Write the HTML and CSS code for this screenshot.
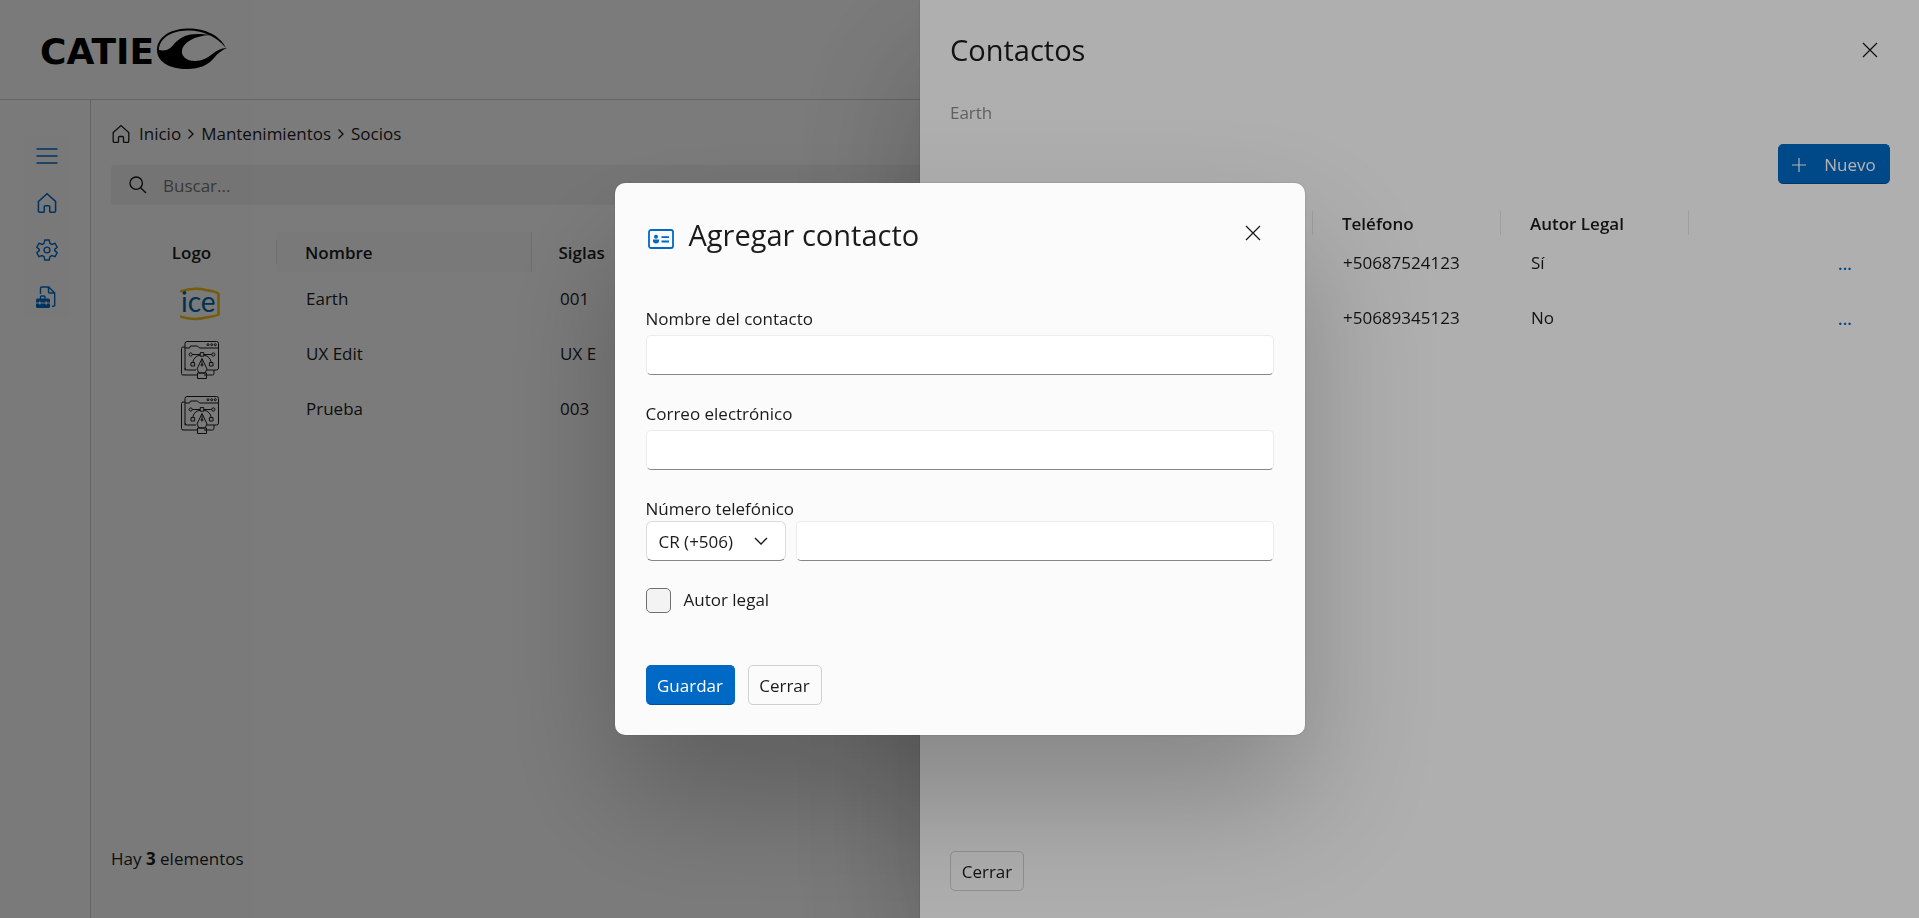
FILE: index.html
```html
<!DOCTYPE html>
<html lang="es">
<head>
<meta charset="utf-8">
<title>CATIE - Socios</title>
<meta name="viewport" content="width=device-width, initial-scale=1">
<link rel="stylesheet" href="styles.css">
</head>
<body>
<svg class="defs" aria-hidden="true">
  <symbol id="i-home" viewBox="0 0 20 20"><path d="M2.2 8.6 10 1.6l7.800 7v8.600a1.200 1.200 0 0 1-1.200 1.200h-3.100a1 1 0 0 1-1-1v-3.900a1 1 0 0 0-1-1H8.500a1 1 0 0 0-1 1v3.900a1 1 0 0 1-1 1H3.400a1.200 1.200 0 0 1-1.200-1.200z"/></symbol>
  <symbol id="i-close" viewBox="0 0 16 16"><path d="M1 1l14 14M15 1 1 15"/></symbol>
  <symbol id="i-next" viewBox="0 0 8 12"><path d="M1.500 1.500 6 6l-4.500 4.500"/></symbol>
  <symbol id="i-design" viewBox="0 0 40 40">
    <path d="M5 30.500V3.500a2 2 0 0 1 2-2h29.500a2 2 0 0 1 2 2V28a2 2 0 0 1-2 2H27M16 30H7a2 2 0 0 1-2-2M5 7H3a1.500 1.500 0 0 0-1.500 1.500v25A1.500 1.500 0 0 0 3 35h14M24 35h8.500a1.500 1.500 0 0 0 1.500-1.500V30M5 8h4.500l1-2h7l2 2h19"/>
    <circle cx="28" cy="4.700" r="1"/><circle cx="31.700" cy="4.700" r="1"/><circle cx="35.300" cy="4.700" r="1"/>
    <path d="M12.500 14.500h7.500M24 14.500h7.500M20.200 12.600h3.600v3.600h-3.600zM20.200 15.200q-6.500 1-7.400 7.300M23.800 15.200q6.500 1 7.400 7.300M11 22.600h3.600v3.400H11zM29.400 22.600H33v3.400h-3.600z"/>
    <circle cx="10.700" cy="14.500" r="1.600"/><circle cx="33.300" cy="14.500" r="1.600"/>
    <path d="M22 18.500 17 29l2 4h6l2-4zM22 19v6M17.500 33h9v5.500h-9z"/><circle cx="22" cy="25" r="1"/>
  </symbol>
</svg>

<div class="app">
  <header class="topbar">
    <svg class="brand" viewBox="0 0 190 44" role="img" aria-label="CATIE">
      <text x="0" y="37" class="brand-text">CATIE</text>
      <path d="M186 21C180 8 164 1 147 1.500C129 2 117 11 117 23C117 35 130 42 147 42C160 42 168 38 174 31C178 26 182 23 187 21C174 21 170 34 155 34C146 34 141 29 142 23C144 15 154 9 170 8C150 5 143 9 137 14C131 20 129 25 119 23C119 12 130 4 147 3.500C163 3 177 10 186 21Z"/>
    </svg>
  </header>
  <div class="body">
    <nav class="side" aria-label="Principal">
      <div class="side-menu">
        <button class="side-btn" type="button" aria-label="Menú"><svg class="ico-side" viewBox="0 0 22 22"><path d="M.5 4h21M.5 11h21M.5 18h21"/></svg></button>
        <a class="side-btn" href="#" aria-label="Inicio"><svg class="ico-side"><use href="#i-home"/></svg></a>
        <a class="side-btn" href="#" aria-label="Configuración"><svg class="ico-side" viewBox="0 0 22 22"><path d="M8.800 1h4.400l.7 3.300 1.900 1.100 3.200-1 2.200 3.800-2.500 2.200v1.200l2.500 2.200-2.200 3.800-3.200-1-1.900 1.100-.7 3.300H8.800l-.7-3.300-1.900-1.100-3.200 1L.8 13.800l2.500-2.200v-1.200L.8 8.200 3 4.400l3.200 1 1.900-1.100z"/><circle cx="11" cy="11" r="2.900"/></svg></a>
        <a class="side-btn" href="#" aria-label="Mantenimientos"><svg class="ico-side" viewBox="0 0 22 22"><path d="M4.500 8V2.200A1.200 1.200 0 0 1 5.700 1h7l6 6v12a1.200 1.200 0 0 1-1.200 1.200H16M12.500 1v5a1 1 0 0 0 1 1h5M4.500 13v-2a1 1 0 0 1 1-1H8a1 1 0 0 1 1 1v2"/><path class="solid" d="M1.500 12.500h11a1.500 1.500 0 0 1 1.500 1.500v2.500h-3v-1h-1.500v1h-5v-1H3v1H0V14a1.500 1.500 0 0 1 1.500-1.500zM0 17.500h3v1h1.500v-1h5v1H11v-1h3v3a1.500 1.500 0 0 1-1.500 1.500h-11A1.500 1.500 0 0 1 0 20.500z"/></svg></a>
      </div>
    </nav>
    <main class="main">
      <nav class="crumbs" aria-label="Ruta">
        <a class="crumb crumb-home" href="#"><svg class="ico-crumb"><use href="#i-home"/></svg>Inicio</a>
        <svg class="ico-next"><use href="#i-next"/></svg>
        <a class="crumb" href="#">Mantenimientos</a>
        <svg class="ico-next"><use href="#i-next"/></svg>
        <a class="crumb" href="#">Socios</a>
      </nav>
      <label class="search">
        <svg class="ico-search" viewBox="0 0 18 18"><circle cx="7.200" cy="7.200" r="6.200"/><path d="M11.700 11.700 17 17"/></svg>
        <input class="search-input" type="search" placeholder="Buscar..." aria-label="Buscar">
      </label>
      <table class="grid">
        <colgroup><col class="c-logo"><col class="c-name"><col class="c-code"><col></colgroup>
        <thead><tr><th class="th-logo">Logo</th><th class="th-name">Nombre</th><th>Siglas</th><th></th></tr></thead>
        <tbody>
          <tr><td class="td-logo"><svg class="logo-img" viewBox="0 0 40 40" role="img" aria-label="ice"><path class="ice-frame" d="M0 6.500Q13 2 26 5Q38 7 38.500 9V29.500Q36 31 26 32.500Q13 36 0 31.500"/><text x="1" y="27" class="ice-text">ice</text></svg></td><td>Earth</td><td>001</td><td></td></tr>
          <tr><td class="td-logo"><svg class="logo-img design"><use href="#i-design"/></svg></td><td>UX Edit</td><td>UX E</td><td></td></tr>
          <tr><td class="td-logo"><svg class="logo-img design"><use href="#i-design"/></svg></td><td>Prueba</td><td>003</td><td></td></tr>
        </tbody>
      </table>
      <p class="count">Hay <b>3</b> elementos</p>
    </main>
  </div>
</div>

<div class="scrim">
  <aside class="drawer" role="dialog" aria-labelledby="drawer-title">
    <div class="drawer-head">
      <h2 class="title" id="drawer-title">Contactos</h2>
      <button class="close" type="button" aria-label="Cerrar panel"><svg class="ico-close"><use href="#i-close"/></svg></button>
    </div>
    <p class="partner">Earth</p>
    <div class="drawer-tools">
      <button class="btn btn-primary btn-new" type="button"><svg class="ico-plus" viewBox="0 0 14 14"><path d="M7 0v14M0 7h14"/></svg>Nuevo</button>
    </div>
    <table class="contacts">
      <thead><tr><th></th><th></th><th>Teléfono</th><th>Autor Legal</th><th class="last"></th></tr></thead>
      <tbody>
        <tr><td></td><td></td><td>+50687524123</td><td>Sí</td><td class="more"><a class="more-link" href="#" aria-label="Opciones">...</a></td></tr>
        <tr><td></td><td></td><td>+50689345123</td><td>No</td><td class="more"><a class="more-link" href="#" aria-label="Opciones">...</a></td></tr>
      </tbody>
    </table>
    <div class="drawer-foot"><button class="btn" type="button">Cerrar</button></div>
  </aside>
</div>

<div class="scrim scrim-center">
  <form class="modal" role="dialog" aria-labelledby="modal-title">
    <div class="modal-head">
      <svg class="ico-card" viewBox="0 0 26 22"><rect x="1" y="2" width="24" height="18" rx="2"/><circle class="solid" cx="8" cy="8.700" r="2"/><path class="solid" d="M5 11.500h6v1.300a3 2.700 0 0 1-6 0z"/><path d="M13.500 9.200H21M13.500 13.500H21"/></svg>
      <h2 class="title" id="modal-title">Agregar contacto</h2>
      <button class="close" type="button" aria-label="Cerrar diálogo"><svg class="ico-close"><use href="#i-close"/></svg></button>
    </div>
    <div class="field">
      <label for="nombre">Nombre del contacto</label>
      <input class="input" id="nombre" type="text">
    </div>
    <div class="field">
      <label for="correo">Correo electrónico</label>
      <input class="input" id="correo" type="email">
    </div>
    <div class="field field-phone">
      <label for="telefono">Número telefónico</label>
      <div class="phone">
        <div class="select-wrap">
          <select class="input select" aria-label="Código de país"><option>CR (+506)</option></select>
          <svg class="ico-down" viewBox="0 0 14 8"><path d="M1 1l6 6 6-6"/></svg>
        </div>
        <input class="input" id="telefono" type="tel">
      </div>
    </div>
    <label class="check"><input class="check-box" type="checkbox">Autor legal</label>
    <div class="actions">
      <button class="btn btn-primary" type="submit">Guardar</button>
      <button class="btn" type="button">Cerrar</button>
    </div>
  </form>
</div>
</body>
</html>
```
FILE: styles.css
```css
* { box-sizing: border-box; }

:root {
  --ink: #1b1b1b;
  --accent: #0069c5;
  --surface: #fbfbfb;
  --shadow: 0 0 2px rgba(0, 0, 0, .2), 0 64px 128px rgba(0, 0, 0, .24);
}

body {
  margin: 0;
  color: var(--ink);
  background: var(--surface);
  font: 17px/26px "Segoe UI", "Open Sans", "Noto Sans", sans-serif;
  overflow: hidden;
}

svg { fill: none; stroke: currentColor; flex: none; }
.defs { position: absolute; width: 0; height: 0; }
.solid { fill: currentColor; stroke: none; }
button, input, select { font: inherit; color: inherit; }
a { color: inherit; text-decoration: none; }
p, h2 { margin: 0; }
table { border-collapse: collapse; table-layout: fixed; width: 100%; text-align: left; }
th { font-weight: 600; }

.app { display: flex; flex-direction: column; height: 100vh; }
.topbar { height: 100px; padding: 27px 40px 0; border-bottom: 1px solid #cfcfcf; flex: none; }
.brand { width: 190px; height: 44px; fill: #000; stroke: none; display: block; overflow: visible; }
.brand-text { font: bold 36px "DejaVu Sans", sans-serif; }
.body { display: flex; flex: 1; min-height: 0; }

.side { width: 91px; padding: 36px 0 0 24px; border-right: 1px solid #cfcfcf; flex: none; }
.side-menu { display: flex; flex-direction: column; gap: 7px; width: 45px; background: #f8f8f8; }
.side-btn {
  display: flex; align-items: center; justify-content: center;
  width: 45px; height: 40px; padding: 0; border: 0;
  background: none; color: var(--accent);
}
.ico-side { width: 22px; height: 22px; stroke-width: 1.400; }

.main { display: flex; flex-direction: column; flex: 1; min-width: 0; padding: 20px 20px 46px; }
.crumbs { display: flex; align-items: center; gap: 6px; height: 28px; }
.crumb-home { display: flex; align-items: center; gap: 8px; }
.ico-crumb { width: 20px; height: 20px; stroke-width: 1.300; }
.ico-next { width: 8px; height: 12px; stroke-width: 1.300; }

.search {
  display: flex; align-items: center; gap: 16px;
  height: 40px; margin-top: 17px; padding: 0 18px;
  background: #efefef; border-radius: 4px; flex: none;
}
.ico-search { width: 18px; height: 18px; stroke-width: 1.400; }
.search-input { flex: 1; padding: 2px 0 0; border: 0; background: none; outline: 0; }
.search-input::placeholder { color: #767676; opacity: 1; }

.grid { margin-top: 27px; }
.c-logo { width: 166px; }
.c-name { width: 254px; }
.c-code { width: 254px; }
.grid th { height: 40px; padding: 2px 27px 0; border-right: 1px solid #e2e2e2; }
.grid .th-logo {
  padding: 2px 5px 0 0; text-align: center; border: 0;
  background: linear-gradient(#e2e2e2, #e2e2e2) right center / 1px 24px no-repeat;
}
.grid .th-name { padding-left: 28px; background: #f6f6f6; }
.grid td { height: 55px; padding: 14px 29px 0; vertical-align: top; }
.grid .td-logo { padding: 13px 0 0 69px; }
.logo-img { display: block; width: 40px; height: 40px; }
.design { stroke-width: 1; }
.ice-frame { stroke: #f0bd10; stroke-width: 2.600; }
.ice-text { font: 28px "Lato", sans-serif; fill: #0063a8; stroke: none; }
.count { margin-top: auto; }

.scrim {
  position: fixed; inset: 0; display: flex; justify-content: flex-end;
  background: rgba(0, 0, 0, .3);
}
.scrim-center { align-items: center; justify-content: center; }

.title { font-size: 29px; line-height: 40px; font-weight: 400; }
.close {
  display: flex; align-items: center; justify-content: center;
  width: 40px; height: 40px; margin-left: auto; padding: 0; border: 0; background: none;
}
.ico-close { width: 16px; height: 16px; stroke-width: 1.300; }

.drawer {
  display: flex; flex-direction: column;
  width: 52.060%; padding: 30px 29px 27px 30px;
  background: var(--surface); box-shadow: var(--shadow);
}
.drawer-head { display: flex; align-items: center; }
.partner { margin-top: 30px; color: #8a8a8a; }
.drawer-tools { display: flex; justify-content: flex-end; margin-top: 18px; }
.contacts { margin-top: 19px; }
.contacts th {
  height: 40px; padding: 2px 0 0 16px;
  background: linear-gradient(#e2e2e2, #e2e2e2) right 13px center / 1px 24px no-repeat;
}
.contacts .last { background: none; }
.contacts td { height: 55px; padding: 7px 0 0 17px; vertical-align: top; }
.contacts .more { padding: 8px 38px 0 0; text-align: right; }
.more-link { color: var(--accent); font-weight: 600; }
.drawer-foot { margin-top: auto; }

.btn {
  display: inline-flex; align-items: center; justify-content: center;
  min-width: 74px; height: 40px; padding: 2px 10px 0;
  background: transparent; border: 1px solid #d0d0d0; border-radius: 5px;
}
.btn-primary {
  min-width: 89px; color: #fff; background: var(--accent);
  border-color: var(--accent); border-bottom-color: #004f96;
}
.btn-new { gap: 18px; min-width: 112px; }
.ico-plus { width: 14px; height: 14px; stroke-width: 1.200; }

.modal {
  width: 690px; max-width: 100%; padding: 32px 31px 30px;
  background: var(--surface); border-radius: 10px; box-shadow: var(--shadow);
}
.modal-head { display: flex; align-items: center; margin-bottom: 51px; }
.modal-head .title { margin-left: 15px; }
.modal-head .close { height: 36px; align-self: flex-start; margin-right: 1px; }
.ico-card { width: 26px; height: 22px; margin: 8px 0 0 2px; color: var(--accent); stroke-width: 1.800; }
.field { margin-bottom: 26px; }
.field label { display: block; height: 29px; }
.field-phone { margin-bottom: 24px; }
.field-phone label { height: 25px; }
.input {
  display: block; width: 100%; height: 40px; padding: 0 12px;
  background: #fff; border: 1px solid #ececec; border-bottom-color: #868686; border-radius: 5px;
}
.phone { display: flex; gap: 10px; }
.select-wrap { position: relative; flex: none; width: 140px; }
.select { appearance: none; padding-top: 2px; border-color: #dcdcdc; border-bottom-color: #868686; border-radius: 6px; }
.ico-down { position: absolute; top: 16px; right: 18px; width: 14px; height: 8px; stroke-width: 1.400; pointer-events: none; }
.check { display: flex; align-items: center; gap: 13px; height: 30px; }
.check-box {
  appearance: none; width: 25px; height: 25px; margin: 0;
  background: #f3f3f3; border: 1px solid #707070; border-radius: 5px;
}
.actions { display: flex; gap: 13px; margin-top: 50px; }
```
